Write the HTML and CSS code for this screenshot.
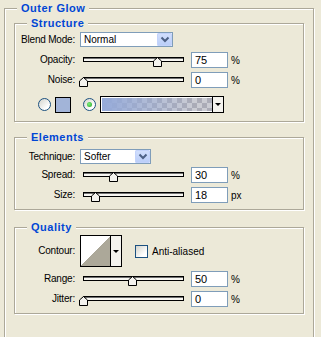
FILE: index.html
```html
<!DOCTYPE html>
<html lang="en">
<head>
    <meta charset="UTF-8">
    <title>Outer Glow</title>
    <link rel="stylesheet" href="styles.css">
</head>
<body>
    <div class="panel">
        <div class="title">Outer Glow</div>

        <!-- Structure -->
        <div class="group structure">
            <div class="title">Structure</div>
            <div class="row sel-row first">
                <span class="label">Blend Mode:</span>
                <div class="select blend">
                    <span class="select-text">Normal</span>
                    <span class="select-btn"><svg width="14" height="11" viewBox="0 0 14 11"><path d="M3.5 3.5 L7 7 L10.5 3.5" fill="none" stroke="#4d6185" stroke-width="2"/></svg></span>
                </div>
            </div>
            <div class="row">
                <span class="label">Opacity:</span>
                <div class="slider">
                    <svg class="thumb" style="left: calc(75% - 5px)" width="9" height="10" viewBox="0 0 9 10"><polygon points="0.5,9.5 0.5,4 4.5,0.5 8.5,4 8.5,9.5" fill="#f4f3ee" stroke="#000"/></svg>
                </div>
                <div class="field">75</div><span class="unit">%</span>
            </div>
            <div class="row">
                <span class="label">Noise:</span>
                <div class="slider">
                    <svg class="thumb" style="left: calc(0% - 5px)" width="9" height="10" viewBox="0 0 9 10"><polygon points="0.5,9.5 0.5,4 4.5,0.5 8.5,4 8.5,9.5" fill="#f4f3ee" stroke="#000"/></svg>
                </div>
                <div class="field">0</div><span class="unit">%</span>
            </div>
            <div class="row color-row">
                <span class="radio"></span>
                <span class="swatch"></span>
                <span class="radio checked"></span>
                <div class="gradient">
                    <span class="gradient-fill"></span>
                    <span class="drop"><i class="arrow"></i></span>
                </div>
            </div>
        </div>

        <!-- Elements -->
        <div class="group elements">
            <div class="title">Elements</div>
            <div class="row sel-row first">
                <span class="label">Technique:</span>
                <div class="select technique">
                    <span class="select-text">Softer</span>
                    <span class="select-btn"><svg width="14" height="11" viewBox="0 0 14 11"><path d="M3.5 3.5 L7 7 L10.5 3.5" fill="none" stroke="#4d6185" stroke-width="2"/></svg></span>
                </div>
            </div>
            <div class="row">
                <span class="label">Spread:</span>
                <div class="slider">
                    <svg class="thumb" style="left: calc(30% - 5px)" width="9" height="10" viewBox="0 0 9 10"><polygon points="0.5,9.5 0.5,4 4.5,0.5 8.5,4 8.5,9.5" fill="#f4f3ee" stroke="#000"/></svg>
                </div>
                <div class="field">30</div><span class="unit">%</span>
            </div>
            <div class="row">
                <span class="label">Size:</span>
                <div class="slider">
                    <svg class="thumb" style="left: calc(12% - 5px)" width="9" height="10" viewBox="0 0 9 10"><polygon points="0.5,9.5 0.5,4 4.5,0.5 8.5,4 8.5,9.5" fill="#f4f3ee" stroke="#000"/></svg>
                </div>
                <div class="field">18</div><span class="unit">px</span>
            </div>
        </div>

        <!-- Quality -->
        <div class="group quality">
            <div class="title">Quality</div>
            <div class="row contour-row">
                <span class="label">Contour:</span>
                <div class="contour">
                    <span class="contour-fill"></span>
                    <span class="drop"><i class="arrow"></i></span>
                </div>
                <span class="checkbox"></span>
                <span class="check-label">Anti-aliased</span>
            </div>
            <div class="row">
                <span class="label">Range:</span>
                <div class="slider">
                    <svg class="thumb" style="left: calc(49% - 5px)" width="9" height="10" viewBox="0 0 9 10"><polygon points="0.5,9.5 0.5,4 4.5,0.5 8.5,4 8.5,9.5" fill="#f4f3ee" stroke="#000"/></svg>
                </div>
                <div class="field">50</div><span class="unit">%</span>
            </div>
            <div class="row">
                <span class="label">Jitter:</span>
                <div class="slider">
                    <svg class="thumb" style="left: calc(0% - 5px)" width="9" height="10" viewBox="0 0 9 10"><polygon points="0.5,9.5 0.5,4 4.5,0.5 8.5,4 8.5,9.5" fill="#f4f3ee" stroke="#000"/></svg>
                </div>
                <div class="field">0</div><span class="unit">%</span>
            </div>
        </div>
    </div>
</body>
</html>
```

FILE: styles.css
```css
body {
    margin: 0;
    background: #ece9d8;
    font-family: "Liberation Sans", Arial, sans-serif;
    font-size: 10px;
    color: #000;
    overflow: hidden;
}

/* etched group boxes */
.panel {
    margin: 8px 0 0 4px;
    width: 310px;
    height: 340px;
    box-sizing: border-box;
    border: 1px solid #aca899;
    box-shadow: inset 1px 1px 0 #fff, 1px 1px 0 #fff;
}
.group {
    margin: 0 9px;
    border: 1px solid #aca899;
    box-shadow: inset 1px 1px 0 #fff, 1px 1px 0 #fff;
}
.title {
    width: max-content;
    margin: -7px 0 0 12px;
    padding: 0 4px;
    background: #ece9d8;
    color: #0046d5;
    font-size: 11px;
    font-weight: bold;
    line-height: 13px;
    letter-spacing: 0.5px;
}
.structure {
    margin-top: 8px;
    padding-bottom: 8px;
}
.elements {
    margin-top: 15px;
    padding-bottom: 6px;
}
.quality {
    margin-top: 17px;
    padding-bottom: 6px;
}

/* rows */
.row {
    display: flex;
    align-items: center;
    height: 16px;
    margin-top: 4px;
}
.sel-row {
    height: 15px;
}
.structure .sel-row + .row {
    margin-top: 5px;
}
.elements .sel-row + .row {
    margin-top: 3px;
}
.structure .first {
    margin-top: 2px;
}
.elements .first {
    margin-top: 5px;
}
.label {
    flex: none;
    width: 60px;
    margin-right: 5px;
    text-align: right;
    line-height: 12px;
    letter-spacing: -0.2px;
}

/* combo box */
.select {
    display: flex;
    height: 15px;
    box-sizing: border-box;
    border: 1px solid #7f9db9;
    background: #fff;
}
.blend {
    width: 93px;
}
.technique {
    width: 71px;
}
.select-text {
    flex: 1;
    padding-left: 3px;
    line-height: 13px;
}
.select-btn {
    display: flex;
    align-items: center;
    justify-content: center;
    width: 15px;
    border-radius: 2px;
    background: linear-gradient(#d3e0fd, #b9cdf8);
    box-shadow: inset 0 0 0 1px #c3d3fb;
}

/* slider */
.slider {
    position: relative;
    flex: none;
    align-self: flex-start;
    width: 101px;
    height: 5px;
    margin: 5px 0 0 3px;
    box-sizing: border-box;
    border: 1px solid #000;
    background: #f7f6f1;
    box-shadow: inset 0 1px 0 #6f6f6f;
}
.thumb {
    position: absolute;
    top: -1px;
    display: block;
}
.field {
    flex: none;
    width: 37px;
    height: 16px;
    margin-left: 7px;
    box-sizing: border-box;
    border: 1px solid #7f9db9;
    background: #fff;
    padding-left: 3px;
    line-height: 14px;
    font-size: 11px;
}
.unit {
    margin-left: 3px;
}

/* colour choice */
.color-row {
    height: 17px;
    margin-top: 8px;
}
.radio {
    position: relative;
    flex: none;
    width: 13px;
    height: 13px;
    box-sizing: border-box;
    border: 1px solid #1c5180;
    border-radius: 50%;
    background: linear-gradient(135deg, #d4d4cc, #fff 75%);
    margin-left: 23px;
}
.radio.checked {
    margin-left: 12px;
}
.radio.checked::after {
    content: "";
    position: absolute;
    left: 3px;
    top: 3px;
    width: 5px;
    height: 5px;
    border-radius: 50%;
    background: radial-gradient(circle at 40% 40%, #7ef07e, #21a121);
}
.swatch {
    flex: none;
    width: 16px;
    height: 16px;
    margin-left: 4px;
    box-sizing: border-box;
    border: 1px solid #000;
    background: #a2b4d8;
}
.gradient {
    display: flex;
    width: 124px;
    height: 17px;
    margin-left: 4px;
    box-sizing: border-box;
    border: 1px solid #000;
}
.gradient-fill {
    flex: 1;
    border: 1px solid #fff;
    border-right: none;
    background:
        linear-gradient(to right, #95aad9, rgba(149, 170, 217, 0) 85%),
        conic-gradient(#abacb7 25%, #cbccd3 0 50%, #abacb7 0 75%, #cbccd3 0) 0 0 / 10px 10px;
}
.drop {
    display: flex;
    align-items: center;
    justify-content: center;
    width: 10px;
    border-left: 1px solid #000;
    background: #f4f3ee;
}
.arrow {
    border-left: 3px solid transparent;
    border-right: 3px solid transparent;
    border-top: 3px solid #000;
}

/* contour */
.contour-row {
    height: 32px;
    margin-top: 1px;
}
.contour {
    display: flex;
    width: 42px;
    height: 32px;
    box-sizing: border-box;
    border: 1px solid #000;
}
.contour-fill {
    flex: 1;
    background: linear-gradient(to top left, #aca899 50%, #fff 50%);
}
.checkbox {
    width: 13px;
    height: 13px;
    margin-left: 13px;
    box-sizing: border-box;
    border: 1px solid #1c5180;
    background: linear-gradient(135deg, #d4d4cc, #fff 75%);
}
.check-label {
    margin-left: 4px;
}
```
